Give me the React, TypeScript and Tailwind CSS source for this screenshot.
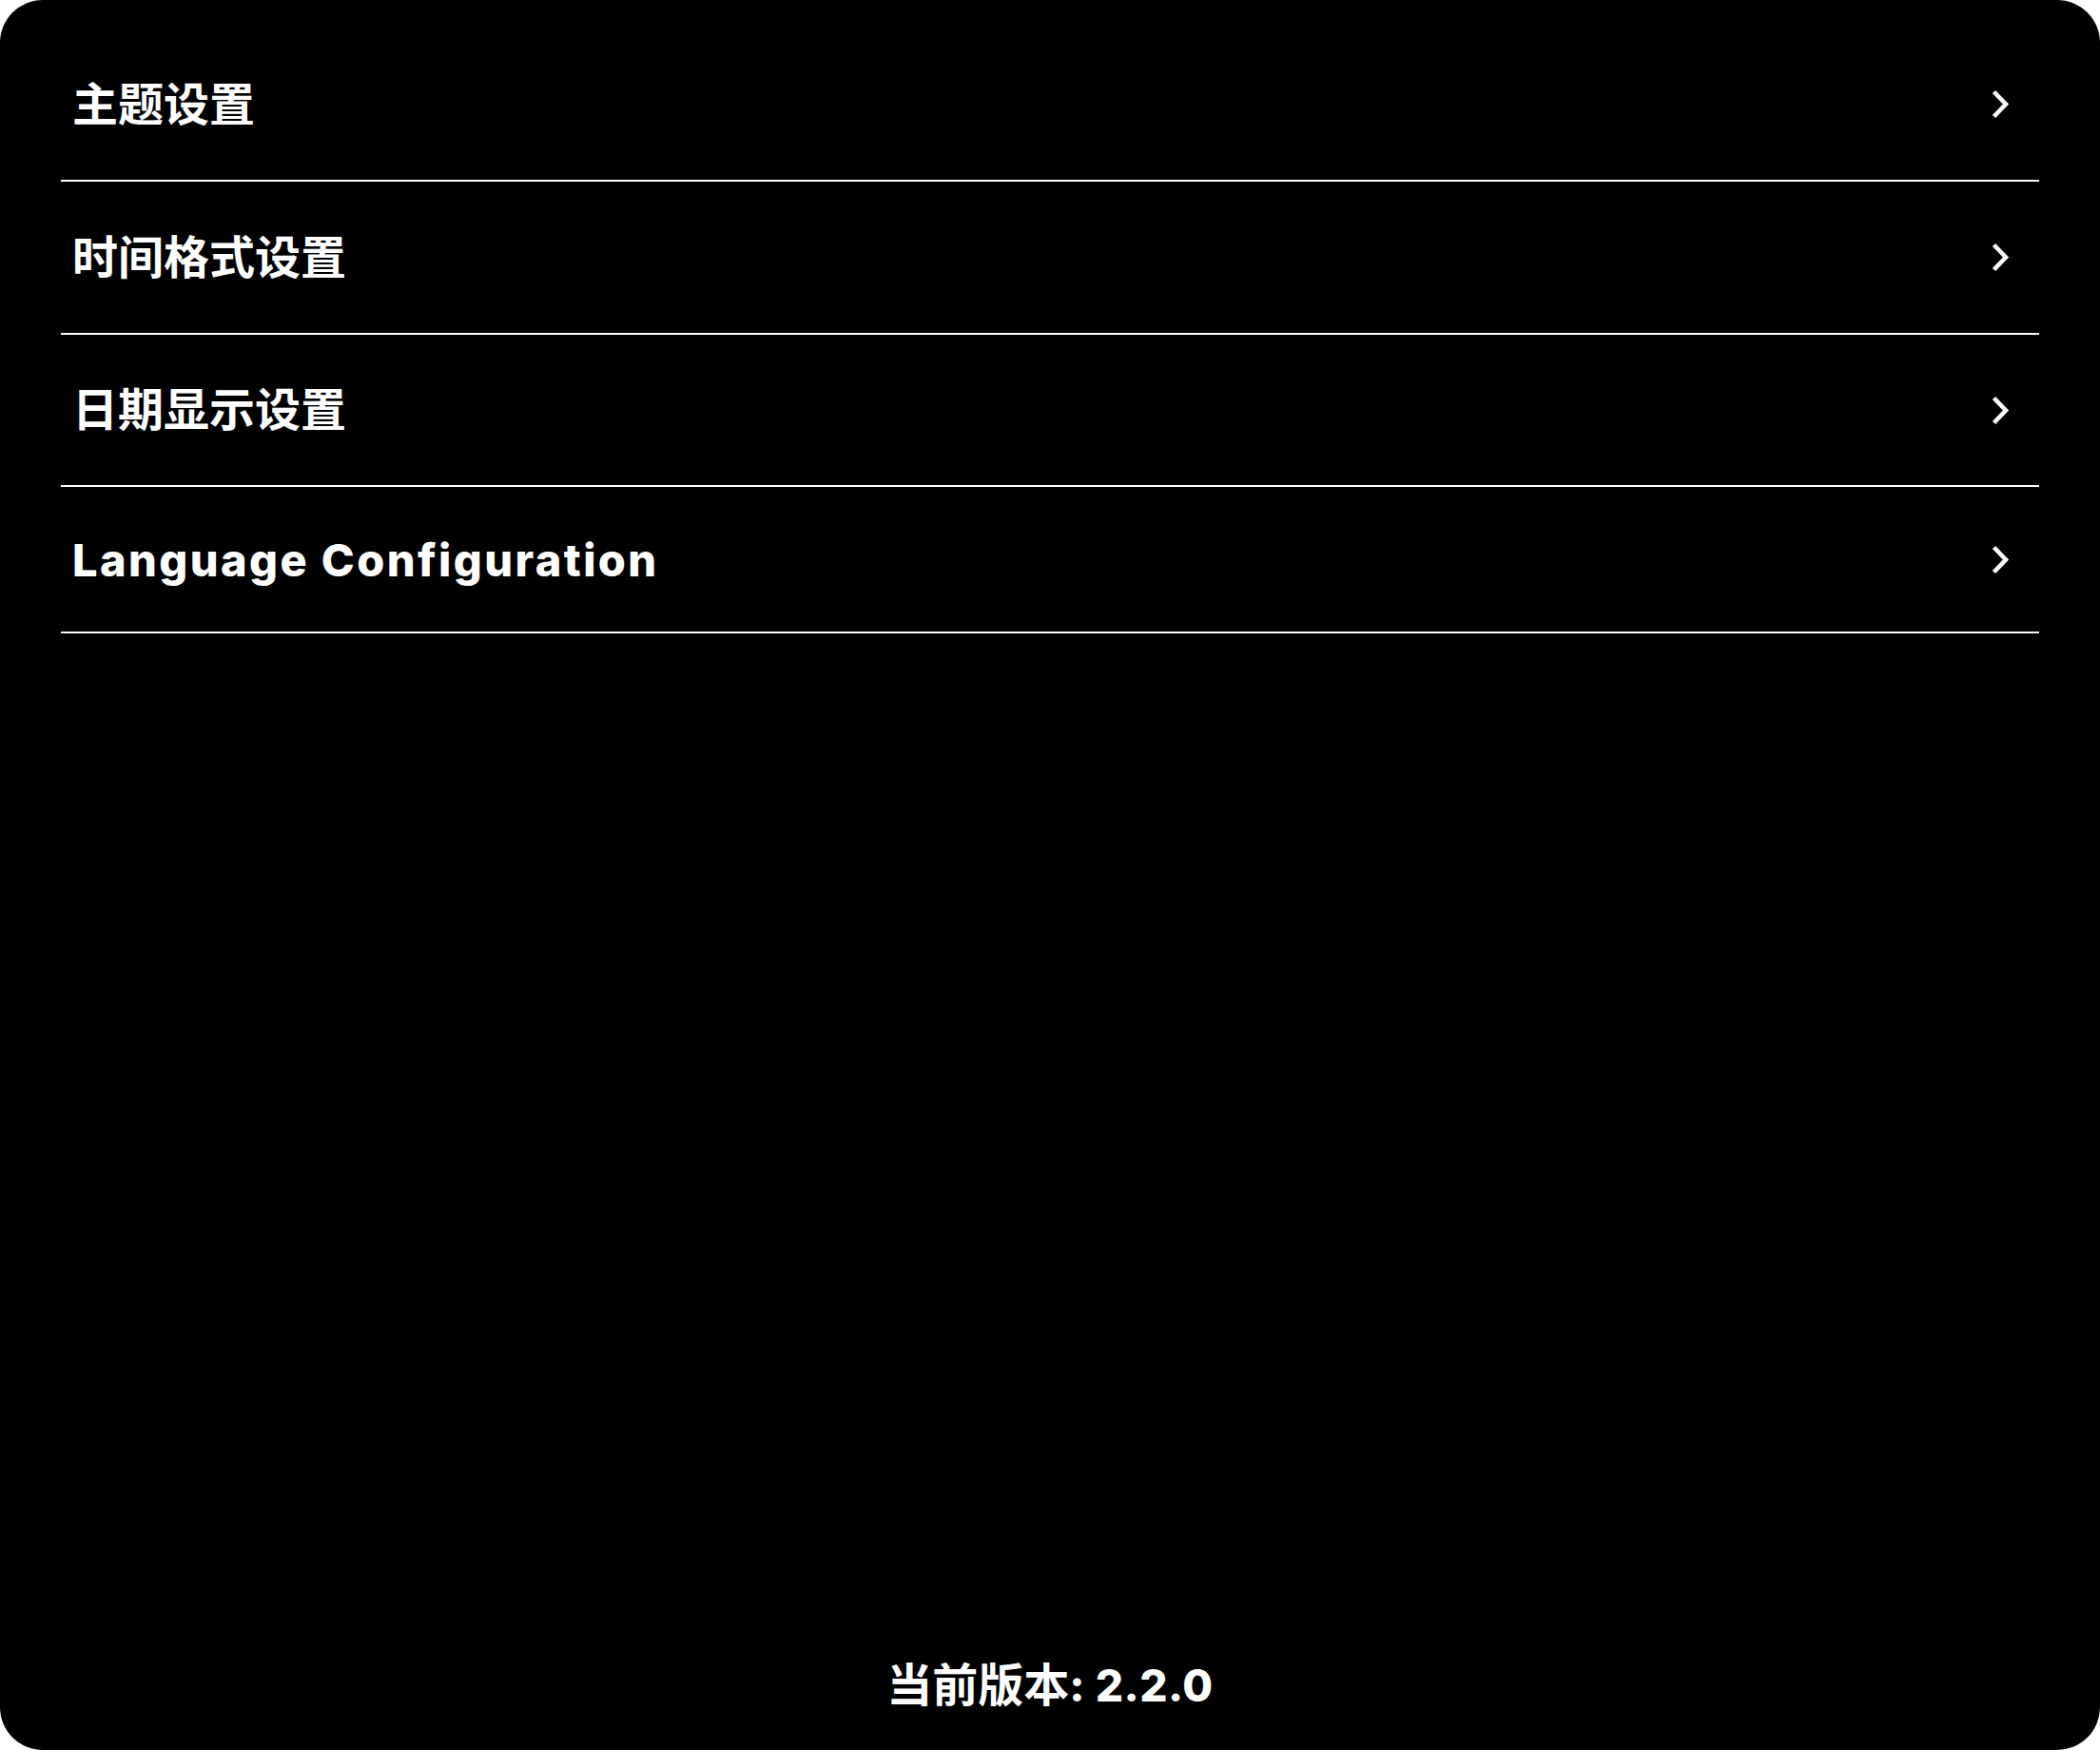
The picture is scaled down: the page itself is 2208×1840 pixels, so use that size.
import React from "react";

function Chevron() {
  return (
    <svg width="20" height="31" viewBox="0 0 20 31" fill="none" className="shrink-0">
      <polyline points="3.5,2.5 16,15.5 3.5,28.5" stroke="white" strokeWidth="4.6" strokeLinecap="butt" strokeLinejoin="miter" />
    </svg>
  );
}

const rows: { label: string; h: string; latin?: boolean }[] = [
  { label: "主题设置", h: "h-[159px]" },
  { label: "时间格式设置", h: "h-[159px]" },
  { label: "日期显示设置", h: "h-[158px]" },
  { label: "Language Configuration", h: "h-[152px]", latin: true },
];

export default function App() {
  return (
    <div className="w-[2208px] h-[1840px] bg-white font-['Inter','Noto_Sans_CJK_SC',sans-serif]">
      <div className="w-full h-full bg-black rounded-[45px] flex flex-col text-white">
        <div className="px-[64px] pt-[30px] flex flex-col">
          {rows.map((r) => (
            <div key={r.label} className="flex flex-col">
              <div className={`${r.h} flex items-center justify-between pl-[12px] pr-[31px]`}>
                {r.latin ? (
                  <span className="text-[47px] leading-none font-extrabold tracking-[2.4px]">{r.label}</span>
                ) : (
                  <span className="text-[48px] leading-none font-bold">{r.label}</span>
                )}
                <Chevron />
              </div>
              <div className="h-[2px] bg-white" />
            </div>
          ))}
        </div>
        <div className="flex-1" />
        <div className="h-[80px] mb-[28px] flex items-center justify-center">
          <span className="text-[48px] leading-none font-bold">
            当前版本<span className="text-[46px] font-extrabold tracking-[0.5px]">: 2.2.0</span>
          </span>
        </div>
      </div>
    </div>
  );
}
